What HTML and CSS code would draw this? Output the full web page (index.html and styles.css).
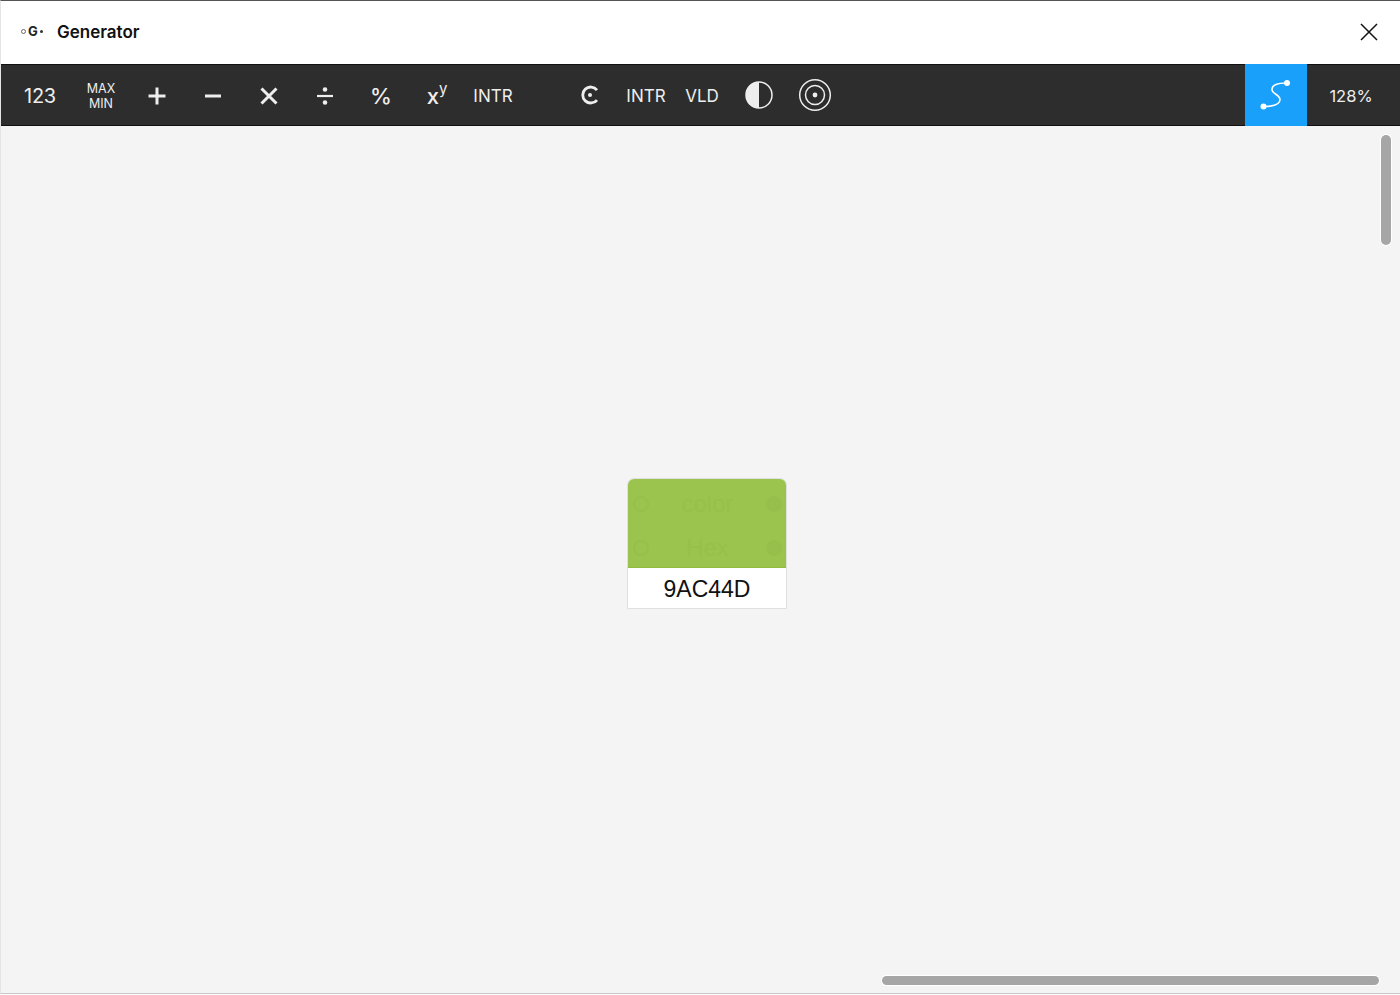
FILE: index.html
```html
<!DOCTYPE html>
<html lang="en">
<head>
  <meta charset="UTF-8">
  <meta name="viewport" content="width=device-width, initial-scale=1.0">
  <title>Generator</title>
  <link rel="stylesheet" href="styles.css">
</head>
<body>

  <div class="window">
    <!-- Title bar -->
    <header class="titlebar">
      <div class="logo"><span class="logo-ring"></span><span class="logo-g">G</span><span class="logo-dot"></span></div>
      <h1 class="title">Generator</h1>
      <svg class="close-icon" width="20" height="20" viewBox="0 0 20 20">
        <path d="M2 2 L18 18 M18 2 L2 18" stroke="#111" stroke-width="1.5" fill="none"/>
      </svg>
    </header>

    <!-- Node toolbar -->
    <nav class="toolbar">
      <div class="tool tool-first tool-big tool-low">123</div>
      <div class="tool tool-stack tool-low"><span>MAX</span><span>MIN</span></div>
      <div class="tool tool-low">
        <svg width="20" height="20" viewBox="0 0 20 20"><path d="M10 1.5 V18.5 M1.5 10 H18.5" class="op"/></svg>
      </div>
      <div class="tool tool-low">
        <svg width="20" height="20" viewBox="0 0 20 20"><path d="M2 10 H18" class="op"/></svg>
      </div>
      <div class="tool tool-low">
        <svg width="20" height="20" viewBox="0 0 20 20"><path d="M2.5 2.5 L17.500 17.500 M17.500 2.500 L2.500 17.500" class="op"/></svg>
      </div>
      <div class="tool tool-low">
        <svg width="20" height="20" viewBox="0 0 20 20">
          <path d="M2 10 H18" class="op op-thin"/>
          <circle cx="10" cy="3.5" r="2.3" fill="#eee"/>
          <circle cx="10" cy="16.5" r="2.3" fill="#eee"/>
        </svg>
      </div>
      <div class="tool tool-symbol">%</div>
      <div class="tool tool-symbol">x<sup class="power">y</sup></div>
      <div class="tool tool-text">INTR</div>

      <div class="tool tool-gap">
        <svg width="22" height="22" viewBox="0 0 22 22">
          <path d="M18 6 A8 8 0 1 0 18 16" fill="none" stroke="#eee" stroke-width="2.8"/>
          <circle cx="11" cy="11" r="2" fill="#eee"/>
        </svg>
      </div>
      <div class="tool tool-text">INTR</div>
      <div class="tool tool-text">VLD</div>
      <div class="tool tool-half">
        <svg width="30" height="30" viewBox="0 0 30 30">
          <circle cx="15" cy="15" r="13" fill="none" stroke="#eee" stroke-width="1.5"/>
          <path d="M15 2 A13 13 0 0 0 15 28 Z" fill="#eee"/>
        </svg>
      </div>
      <div class="tool">
        <svg width="34" height="34" viewBox="0 0 34 34">
          <circle cx="17" cy="17" r="15.3" fill="none" stroke="#eee" stroke-width="1.5"/>
          <circle cx="17" cy="17" r="9.5" fill="none" stroke="#eee" stroke-width="1.5"/>
          <circle cx="17" cy="17" r="2.4" fill="#eee"/>
        </svg>
      </div>

      <div class="tool-active">
        <svg width="36" height="36" viewBox="0 0 36 36">
          <path d="M5.5 29.5 C12 29.5 22 29 22 22.5 C22 17.5 14 17 14 12.5 C14 7 21 6 29 6" fill="none" stroke="#fff" stroke-width="1.6"/>
          <circle cx="5.5" cy="29.5" r="3" fill="#fff"/>
          <circle cx="29" cy="6" r="3" fill="#fff"/>
        </svg>
      </div>
      <div class="zoom-level">128%</div>
    </nav>

    <!-- Canvas -->
    <main class="canvas">
      <div class="node">
        <div class="node-swatch">
          <div class="node-row">
            <span class="port"></span><span class="node-label">color</span><span class="port port-filled"></span>
          </div>
          <div class="node-row">
            <span class="port"></span><span class="node-label">Hex</span><span class="port port-filled"></span>
          </div>
        </div>
        <div class="node-value">9AC44D</div>
      </div>

      <div class="scroll-v"></div>
      <div class="scroll-h"></div>
    </main>
  </div>

</body>
</html>
```

FILE: styles.css
```css
body {
  margin: 0;
  height: 995px;
  overflow: hidden;
  background-color: #fff;
  font-family: Inter, "Liberation Sans", sans-serif;
}

.window {
  display: flex;
  flex-direction: column;
  height: 994px;
  border-top: 1px solid #555;
  border-left: 1px solid #e4e4e4;
  box-sizing: border-box;
  border-bottom: 1px solid #c8c8c8;
}

.titlebar {
  display: flex;
  align-items: center;
  height: 63px;
  flex-shrink: 0;
  box-sizing: border-box;
  padding: 0 21px 2px 20px;
  background-color: #fff;
}

.logo {
  display: flex;
  align-items: center;
  width: 36px;
  color: #222;
}

.logo-ring {
  width: 3px;
  height: 3px;
  border: 1px solid #666;
  border-radius: 50%;
  margin-right: 2px;
}

.logo-g {
  font-size: 13px;
  font-weight: 700;
  line-height: 13px;
}

.logo-dot {
  width: 3px;
  height: 3px;
  margin-left: 2px;
  border-radius: 50%;
  background-color: #333;
}

.title {
  margin: 0;
  flex: 1;
  font-size: 17px;
  font-weight: 600;
  color: #111;
}

.toolbar {
  display: flex;
  align-items: center;
  height: 62px;
  flex-shrink: 0;
  box-sizing: border-box;
  padding-left: 11px;
  background-color: #2d2d2d;
  border-top: 1px solid #111;
  border-bottom: 1px solid #111;
  color: #eee;
}

.tool {
  display: flex;
  align-items: center;
  justify-content: center;
  width: 56px;
  flex-shrink: 0;
}

.tool-first {
  margin-right: 5px;
}

.tool-low {
  margin-top: 2px;
}

.tool-big {
  font-size: 20px;
  letter-spacing: -0.3px;
}

.tool-stack {
  flex-direction: column;
  font-size: 12.5px;
  line-height: 15px;
}

.tool-symbol {
  margin-top: 1px;
  font-size: 22px;
  font-weight: 500;
}

.power {
  font-size: 15px;
  font-weight: 400;
  line-height: 0;
  margin-top: -14px;
}

.tool-text {
  margin-top: 2px;
  font-size: 17px;
}

.tool-gap {
  margin-left: 41px;
}

.tool-half {
  margin-left: 1px;
}

.op {
  fill: none;
  stroke: #eee;
  stroke-width: 3;
}

.op-thin {
  stroke-width: 2.2;
}

.tool-active {
  display: flex;
  align-items: center;
  justify-content: center;
  width: 62px;
  height: 62px;
  margin-top: -1px;
  margin-bottom: -1px;
  margin-left: auto;
  flex-shrink: 0;
  background-color: #18a0fb;
}

.zoom-level {
  width: 93px;
  margin-top: 2px;
  padding-right: 5px;
  box-sizing: border-box;
  text-align: center;
  font-size: 16.5px;
}

.canvas {
  position: relative;
  flex: 1;
  background-color: #f4f4f4;
}

/* node sits on the free canvas */
.node {
  position: absolute;
  left: 626px;
  top: 352px;
  width: 160px;
  height: 131px;
  box-sizing: border-box;
  border: 1px solid #e0e0e0;
  border-radius: 7px 7px 0 0;
  overflow: hidden;
  background-color: #fff;
}

.node-swatch {
  height: 89px;
  box-sizing: border-box;
  padding-top: 3px;
  background-color: #9ac44d;
  border-bottom: 1px solid #8fbb3e;
}

.node-row {
  display: flex;
  align-items: center;
  justify-content: space-between;
  height: 44px;
  padding: 0 4px 0 5px;
  color: #96bf4b;
  font-size: 24px;
  font-family: "Liberation Sans", Arial, sans-serif;
}

.port {
  width: 12px;
  height: 12px;
  border: 2px solid #96bf4b;
  border-radius: 50%;
}

.port-filled {
  background-color: #96bf4b;
}

.node-value {
  height: 41px;
  line-height: 42px;
  text-align: center;
  font-family: "Liberation Sans", Arial, sans-serif;
  font-size: 23px;
  color: #111;
}

.scroll-v {
  position: absolute;
  left: 1380px;
  top: 9px;
  width: 10px;
  height: 110px;
  border-radius: 5px;
  background-color: #a6a6a6;
  box-shadow: 0 0 0 1px #fff;
}

.scroll-h {
  position: absolute;
  left: 881px;
  bottom: 8px;
  width: 497px;
  height: 9px;
  border-radius: 5px;
  background-color: #a6a6a6;
  box-shadow: 0 0 0 1px #fff;
}
```
